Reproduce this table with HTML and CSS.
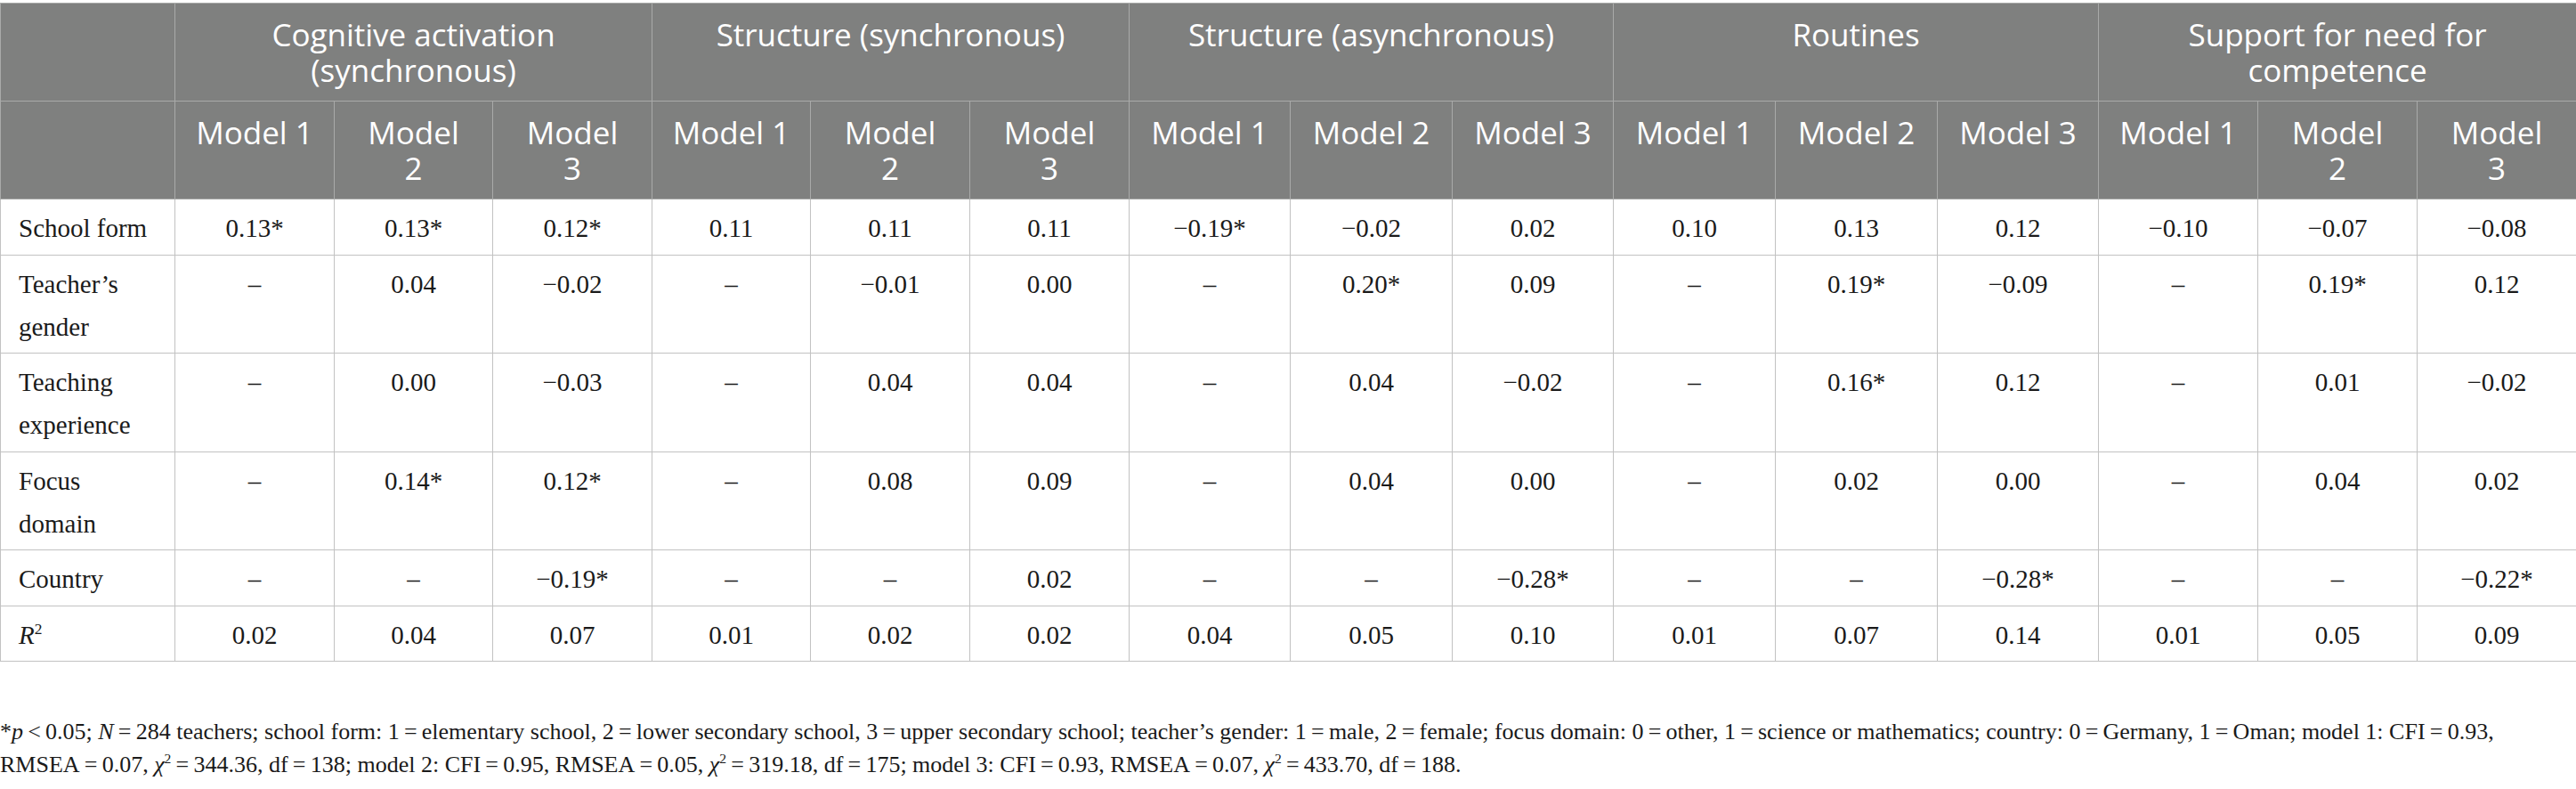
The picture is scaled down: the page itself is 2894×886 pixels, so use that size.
FILE: index.html
```html
<!DOCTYPE html>
<html lang="en">
<head>
    <meta charset="UTF-8">
    <meta name="viewport" content="width=device-width, initial-scale=1.0">
    <title>Regression results</title>
    <link rel="stylesheet" href="styles.css">
</head>
<body>
    <table class="results">
        <colgroup>
            <col class="col-label">
            <col class="w179"><col class="w178"><col class="w179">
            <col class="w178"><col class="w179"><col class="w179">
            <col class="w181"><col class="w182"><col class="w181">
            <col class="w182"><col class="w182"><col class="w181">
            <col class="w179"><col class="w179"><col class="w179">
        </colgroup>
        <thead>
            <tr>
                <th></th>
                <th colspan="3">Cognitive activation (synchronous)</th>
                <th colspan="3">Structure (synchronous)</th>
                <th colspan="3">Structure (asynchronous)</th>
                <th colspan="3">Routines</th>
                <th colspan="3">Support for need for competence</th>
            </tr>
            <tr>
                <th></th>
                <th>Model 1</th><th>Model<br>2</th><th>Model<br>3</th>
                <th>Model 1</th><th>Model<br>2</th><th>Model<br>3</th>
                <th>Model 1</th><th>Model 2</th><th>Model 3</th>
                <th>Model 1</th><th>Model 2</th><th>Model 3</th>
                <th>Model 1</th><th>Model<br>2</th><th>Model<br>3</th>
            </tr>
        </thead>
        <tbody>
            <tr>
                <td>School form</td>
                <td>0.13*</td><td>0.13*</td><td>0.12*</td>
                <td>0.11</td><td>0.11</td><td>0.11</td>
                <td>−0.19*</td><td>−0.02</td><td>0.02</td>
                <td>0.10</td><td>0.13</td><td>0.12</td>
                <td>−0.10</td><td>−0.07</td><td>−0.08</td>
            </tr>
            <tr>
                <td>Teacher’s gender</td>
                <td>–</td><td>0.04</td><td>−0.02</td>
                <td>–</td><td>−0.01</td><td>0.00</td>
                <td>–</td><td>0.20*</td><td>0.09</td>
                <td>–</td><td>0.19*</td><td>−0.09</td>
                <td>–</td><td>0.19*</td><td>0.12</td>
            </tr>
            <tr>
                <td>Teaching experience</td>
                <td>–</td><td>0.00</td><td>−0.03</td>
                <td>–</td><td>0.04</td><td>0.04</td>
                <td>–</td><td>0.04</td><td>−0.02</td>
                <td>–</td><td>0.16*</td><td>0.12</td>
                <td>–</td><td>0.01</td><td>−0.02</td>
            </tr>
            <tr>
                <td>Focus domain</td>
                <td>–</td><td>0.14*</td><td>0.12*</td>
                <td>–</td><td>0.08</td><td>0.09</td>
                <td>–</td><td>0.04</td><td>0.00</td>
                <td>–</td><td>0.02</td><td>0.00</td>
                <td>–</td><td>0.04</td><td>0.02</td>
            </tr>
            <tr>
                <td>Country</td>
                <td>–</td><td>–</td><td>−0.19*</td>
                <td>–</td><td>–</td><td>0.02</td>
                <td>–</td><td>–</td><td>−0.28*</td>
                <td>–</td><td>–</td><td>−0.28*</td>
                <td>–</td><td>–</td><td>−0.22*</td>
            </tr>
            <tr>
                <td><i>R</i><sup>2</sup></td>
                <td>0.02</td><td>0.04</td><td>0.07</td>
                <td>0.01</td><td>0.02</td><td>0.02</td>
                <td>0.04</td><td>0.05</td><td>0.10</td>
                <td>0.01</td><td>0.07</td><td>0.14</td>
                <td>0.01</td><td>0.05</td><td>0.09</td>
            </tr>
        </tbody>
    </table>

    <p class="footnote">*<i>p</i>&thinsp;&lt;&thinsp;0.05; <i>N</i>&thinsp;=&thinsp;284 teachers; school form: 1&thinsp;=&thinsp;elementary school, 2&thinsp;=&thinsp;lower secondary school, 3&thinsp;=&thinsp;upper secondary school; teacher’s gender: 1&thinsp;=&thinsp;male, 2&thinsp;=&thinsp;female; focus domain: 0&thinsp;=&thinsp;other, 1&thinsp;=&thinsp;science or mathematics; country: 0&thinsp;=&thinsp;Germany, 1&thinsp;=&thinsp;Oman; model 1: CFI&thinsp;=&thinsp;0.93, RMSEA&thinsp;=&thinsp;0.07, <i>χ</i><sup>2</sup>&thinsp;=&thinsp;344.36, df&thinsp;=&thinsp;138; model 2: CFI&thinsp;=&thinsp;0.95, RMSEA&thinsp;=&thinsp;0.05, <i>χ</i><sup>2</sup>&thinsp;=&thinsp;319.18, df&thinsp;=&thinsp;175; model 3: CFI&thinsp;=&thinsp;0.93, RMSEA&thinsp;=&thinsp;0.07, <i>χ</i><sup>2</sup>&thinsp;=&thinsp;433.70, df&thinsp;=&thinsp;188.</p>
</body>
</html>
```

FILE: styles.css
```css
body {
    margin: 0;
    padding-top: 3px;
    background-color: #ffffff;
    color: #1a1a1a;
    font-family: "Liberation Serif", "Times New Roman", serif;
}

.results {
    width: 2894px;
    table-layout: fixed;
    border-collapse: collapse;
    border: 1px solid #c2c2c2;
}

.col-label { width: 196px; }
.w178 { width: 178px; }
.w179 { width: 179px; }
.w181 { width: 181px; }
.w182 { width: 182px; }

th, td {
    vertical-align: top;
    text-align: center;
}

th {
    background-color: #7f807f;
    color: #ffffff;
    font-family: "Open Sans", Lato, sans-serif;
    font-weight: 400;
    font-size: 35px;
    line-height: 40px;
    padding: 15px 12px 14px;
    border: 1px solid #a9aaa9;
}

td {
    font-size: 29px;
    line-height: 48px;
    padding: 8px 12px 5.5px;
    border: 1px solid #c2c2c2;
}

td:first-child {
    text-align: left;
    padding-left: 20px;
    padding-right: 20px;
}

sup {
    font-size: 0.6em;
    line-height: 0;
    vertical-align: super;
}

.footnote {
    margin: 60px 0 0;
    font-size: 26px;
    line-height: 37px;
}
```
